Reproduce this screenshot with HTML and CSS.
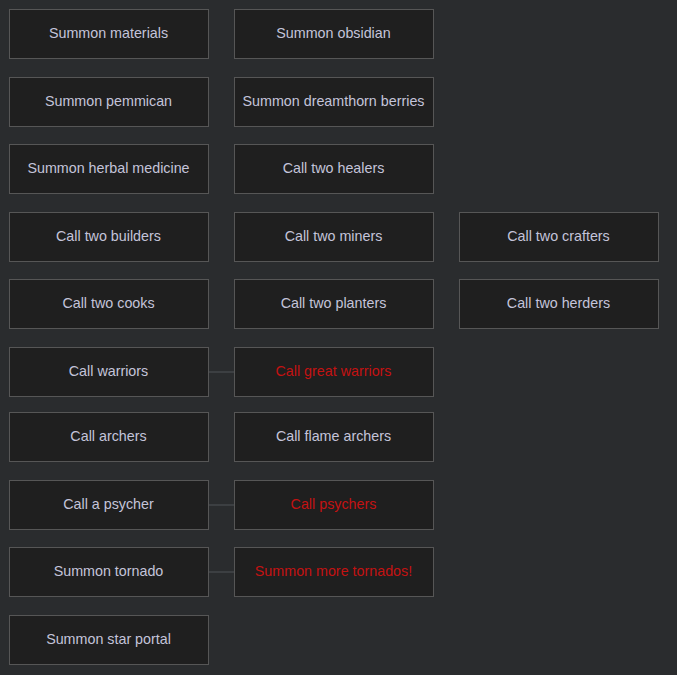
FILE: index.html
```html
<!DOCTYPE html>
<html>
<head>
<meta charset="utf-8">
<link rel="stylesheet" href="styles.css">
</head>
<body>
<div class="tree">
  <div class="row"><div class="btn">Summon materials</div><div class="wire"></div><div class="btn">Summon obsidian</div></div>
  <div class="row"><div class="btn">Summon pemmican</div><div class="wire"></div><div class="btn">Summon dreamthorn berries</div></div>
  <div class="row"><div class="btn">Summon herbal medicine</div><div class="wire"></div><div class="btn">Call two healers</div></div>
  <div class="row"><div class="btn">Call two builders</div><div class="wire"></div><div class="btn">Call two miners</div><div class="wire"></div><div class="btn">Call two crafters</div></div>
  <div class="row"><div class="btn">Call two cooks</div><div class="wire"></div><div class="btn">Call two planters</div><div class="wire"></div><div class="btn">Call two herders</div></div>
  <div class="row"><div class="btn">Call warriors</div><div class="wire on"></div><div class="btn locked">Call great warriors</div></div>
  <div class="row tight"><div class="btn">Call archers</div><div class="wire"></div><div class="btn">Call flame archers</div></div>
  <div class="row"><div class="btn">Call a psycher</div><div class="wire on"></div><div class="btn locked">Call psychers</div></div>
  <div class="row"><div class="btn">Summon tornado</div><div class="wire on"></div><div class="btn locked">Summon more tornados!</div></div>
  <div class="row"><div class="btn">Summon star portal</div></div>
</div>
</body>
</html>
```
FILE: styles.css
```css
html, body {
  margin: 0;
  padding: 0;
  background: #2a2c2e;
}
body {
  width: 677px;
  height: 675px;
  overflow: hidden;
  font-family: "Liberation Sans", Arial, sans-serif;
}
.tree {
  padding: 9px;
  display: flex;
  flex-direction: column;
  gap: 17.5px;
}
.row {
  display: flex;
  align-items: center;
}
.row.tight {
  margin-top: -2px;
}
.btn {
  box-sizing: border-box;
  width: 200px;
  height: 50px;
  flex: none;
  display: flex;
  align-items: center;
  justify-content: center;
  padding: 0 1px 2px 0;
  background: #1f1f1f;
  border: 1px solid #565656;
  color: #c4c4da;
  font-size: 14.3px;
  white-space: nowrap;
}
.btn.locked {
  color: #c41212;
}
.wire {
  width: 25px;
  height: 2px;
  flex: none;
}
.wire.on {
  background: #3c3f42;
}
```
